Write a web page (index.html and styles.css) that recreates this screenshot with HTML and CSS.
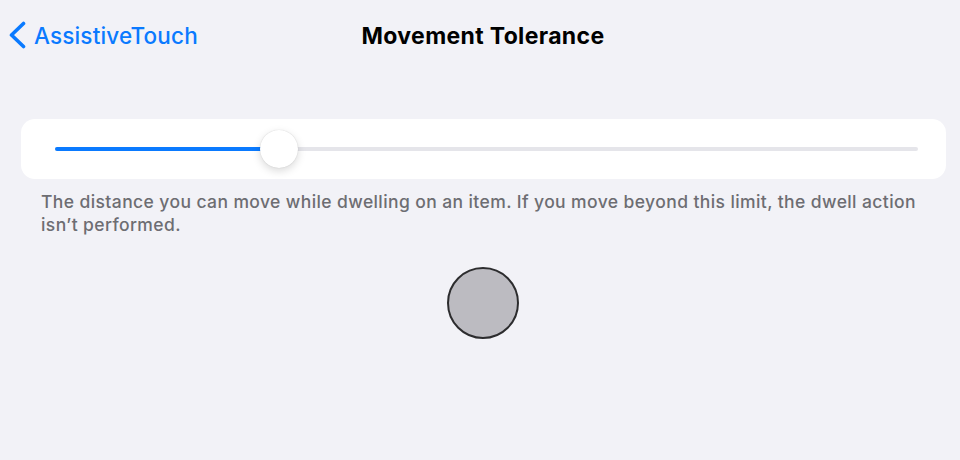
FILE: index.html
```html
<!DOCTYPE html>
<html lang="en">
<head>
    <meta charset="UTF-8">
    <meta name="viewport" content="width=device-width, initial-scale=1.0">
    <title>Movement Tolerance</title>
    <link rel="stylesheet" href="styles.css">
</head>
<body>
    <div class="navbar">
        <a class="back" href="#">
            <svg class="chevron" width="20" height="28" viewBox="0 0 20 28">
                <path d="M16.5 2.5 L4.5 14 L16.5 25.5" fill="none" stroke="#0a7aff" stroke-width="3.6" stroke-linecap="round" stroke-linejoin="round"/>
            </svg>
            <span>AssistiveTouch</span>
        </a>
        <h1 class="title">Movement Tolerance</h1>
    </div>

    <!-- Slider card -->
    <div class="card">
        <div class="track">
            <div class="fill" style="width: 26%;"></div>
            <div class="thumb" style="left: calc(26% - 19px);"></div>
        </div>
    </div>

    <p class="footer">The distance you can move while dwelling on an item. If you move beyond this limit, the dwell action isn’t performed.</p>

    <div class="preview">
        <div class="dot"></div>
    </div>
</body>
</html>
```

FILE: styles.css
```css
body {
    margin: 0;
    background-color: #f2f2f7;
    font-family: Inter, "Noto Sans", sans-serif;
    width: 960px;
    height: 460px;
    overflow: hidden;
}
.navbar {
    position: relative;
    height: 72px;
    display: flex;
    align-items: center;
    justify-content: center;
}
.back {
    position: absolute;
    left: 7px;
    top: 21px;
    display: flex;
    align-items: center;
    gap: 7px;
    color: #0a7aff;
    text-decoration: none;
    font-size: 22.5px;
    font-weight: 500;
    letter-spacing: 0.15px;
}
.title {
    margin: 0;
    padding-left: 6px;
    font-size: 23px;
    font-weight: 700;
    color: #000;
    letter-spacing: 0.35px;
}
.card {
    margin: 47px 14px 0 21px;
    height: 60px;
    background-color: white;
    border-radius: 14px;
    display: flex;
    align-items: center;
    padding: 0 28px 0 34px;
}
.track {
    position: relative;
    flex: 1;
    height: 4px;
    border-radius: 2px;
    background-color: #e5e5ea;
}
.fill {
    height: 100%;
    border-radius: 2px;
    background-color: #0a7aff;
}
.thumb {
    position: absolute;
    top: -17px;
    width: 38px;
    height: 38px;
    border-radius: 50%;
    background-color: white;
    box-shadow: 0 3px 8px rgba(0, 0, 0, 0.15), 0 0 1px rgba(0, 0, 0, 0.2);
}
.footer {
    margin: 11px 30px 0 41px;
    font-size: 17.5px;
    line-height: 23px;
    font-weight: 500;
    color: #6d6d72;
    letter-spacing: 0.4px;
}
.preview {
    display: flex;
    justify-content: center;
    padding-top: 31px;
    padding-left: 6px;
}
.dot {
    width: 68px;
    height: 68px;
    border-radius: 50%;
    background-color: #bcbbc1;
    border: 2px solid #2c2c2e;
}
```
